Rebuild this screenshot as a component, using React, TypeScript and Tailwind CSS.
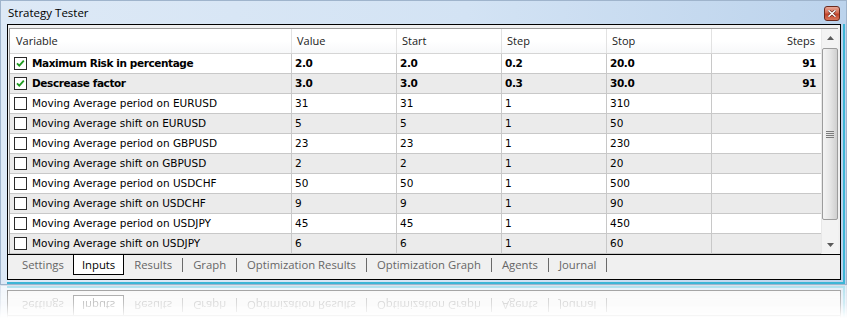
import React from "react";

type Row = {
  name: string;
  v: string;
  s: string;
  st: string;
  sp: string;
  steps?: string;
  checked?: boolean;
};

const rows: Row[] = [
  { name: "Maximum Risk in percentage", v: "2.0", s: "2.0", st: "0.2", sp: "20.0", steps: "91", checked: true },
  { name: "Descrease factor", v: "3.0", s: "3.0", st: "0.3", sp: "30.0", steps: "91", checked: true },
  { name: "Moving Average period on EURUSD", v: "31", s: "31", st: "1", sp: "310" },
  { name: "Moving Average shift on EURUSD", v: "5", s: "5", st: "1", sp: "50" },
  { name: "Moving Average period on GBPUSD", v: "23", s: "23", st: "1", sp: "230" },
  { name: "Moving Average shift on GBPUSD", v: "2", s: "2", st: "1", sp: "20" },
  { name: "Moving Average period on USDCHF", v: "50", s: "50", st: "1", sp: "500" },
  { name: "Moving Average shift on USDCHF", v: "9", s: "9", st: "1", sp: "90" },
  { name: "Moving Average period on USDJPY", v: "45", s: "45", st: "1", sp: "450" },
  { name: "Moving Average shift on USDJPY", v: "6", s: "6", st: "1", sp: "60" },
];

const tabs = ["Results", "Graph", "Optimization Results", "Optimization Graph", "Agents", "Journal"];

function Checkbox({ checked }: { checked?: boolean }) {
  return (
    <div className="w-[13px] h-[13px] border border-[#2a2a2a] bg-white flex items-center justify-center shrink-0">
      {checked && (
        <svg width="11" height="11" viewBox="0 0 11 11">
          <path d="M2 5.3 L4.3 7.6 L8.8 2.6" fill="none" stroke="#1e9a1e" strokeWidth="1.8" />
        </svg>
      )}
    </div>
  );
}

function TabStrip() {
  return (
    <div className="h-[25px] border-t border-black bg-[#f0f0f0] flex items-start pl-[4px] font-['Open_Sans',sans-serif] text-[11.3px] leading-none">
      <div className="h-[20px] flex items-center">
        <div className="pl-[10px] pr-[9px] text-[#666666]">Settings</div>
        <div className="h-[20px] px-[8px] bg-white border-x border-b border-black flex items-center text-black">
          Inputs
        </div>
        {tabs.map((t) => (
          <div key={t} className="flex items-center h-[20px]">
            <div className="px-[10px] text-[#666666]">{t}</div>
            <div className="w-px h-[14px] bg-[#6a6a6a]" />
          </div>
        ))}
      </div>
    </div>
  );
}

function Scrollbar() {
  return (
    <div className="w-[17px] h-[225px] bg-[#f3f3f3] border-l border-[#e8e8e8] flex flex-col">
      <div className="h-[18px] flex items-center justify-center">
        <svg width="7" height="4" viewBox="0 0 7 4">
          <path d="M0 4 L3.5 0 L7 4 Z" fill="#5a5a5a" />
        </svg>
      </div>
      <div className="h-[172px] mt-[1px] border border-[#9c9c9c] rounded-[2px] bg-[linear-gradient(to_right,#f4f4f4,#e6e6e6_50%,#cfcfcf)] flex items-center justify-center">
        <div className="flex flex-col gap-[1px]">
          <div className="w-[8px] h-px bg-[#7c7c7c]" />
          <div className="w-[8px] h-px bg-[#7c7c7c]" />
          <div className="w-[8px] h-px bg-[#7c7c7c]" />
          <div className="w-[8px] h-px bg-[#7c7c7c]" />
        </div>
      </div>
      <div className="flex-1" />
      <div className="h-[18px] flex items-center justify-center">
        <svg width="7" height="4" viewBox="0 0 7 4">
          <path d="M0 0 L3.5 4 L7 0 Z" fill="#5a5a5a" />
        </svg>
      </div>
    </div>
  );
}

function Table() {
  const cell = "border-r border-[#c8c8c8] flex items-center pl-[3px] overflow-hidden whitespace-nowrap";
  const hcell = "border-r border-[#e2e2e2] flex items-center pl-[5px] whitespace-nowrap";
  return (
    <div className="flex border-l border-t border-[#9a9a9a] bg-white">
      <div className="w-[811px]">
        <div className="h-[25px] grid grid-cols-[282px_105px_105px_105px_105px_109px] border-b border-[#d5d5d5] bg-[linear-gradient(to_bottom,#ffffff,#ffffff_50%,#f7f8f9)] font-['Open_Sans',sans-serif] text-[11px] text-[#1a1a1a]">
          <div className={hcell + " pl-[6px]"}>Variable</div>
          <div className={hcell}>Value</div>
          <div className={hcell}>Start</div>
          <div className={hcell}>Step</div>
          <div className={hcell}>Stop</div>
          <div className="flex items-center justify-end pr-[6px]">Steps</div>
        </div>
        {rows.map((r, i) => {
          const bold = r.checked ? "font-bold tracking-[-0.4px]" : "";
          return (
            <div
              key={r.name}
              className={
                "h-[20px] grid grid-cols-[282px_105px_105px_105px_105px_109px] border-b border-[#c8c8c8] font-['DejaVu_Sans',sans-serif] text-[10.5px] text-black " +
                (i % 2 === 1 ? "bg-[#ebebeb]" : "bg-white")
              }
            >
              <div className={cell + " pl-[4px] gap-[5px]"}>
                <Checkbox checked={r.checked} />
                <span className={bold}>{r.name}</span>
              </div>
              <div className={cell}><span className={bold}>{r.v}</span></div>
              <div className={cell}><span className={bold}>{r.s}</span></div>
              <div className={cell}><span className={bold}>{r.st}</span></div>
              <div className={cell}><span className={bold}>{r.sp}</span></div>
              <div className="flex items-center justify-end pr-[5px]">
                <span className={bold}>{r.steps ?? ""}</span>
              </div>
            </div>
          );
        })}
      </div>
      <Scrollbar />
    </div>
  );
}

function CloseButton() {
  return (
    <div className="w-[16px] h-[15px] mt-[5px] rounded-[3px] border border-[#6b2a1e] bg-[linear-gradient(to_bottom,#e9a797,#d36a52_45%,#c0432b_55%,#d8755a)] flex items-center justify-center">
      <svg width="8" height="7" viewBox="0 0 8 7">
        <path d="M1 0.8 L7 6.2 M7 0.8 L1 6.2" stroke="#5a1a10" strokeWidth="2.6" strokeLinecap="square" />
        <path d="M1 0.8 L7 6.2 M7 0.8 L1 6.2" stroke="#ffffff" strokeWidth="1.5" strokeLinecap="square" />
      </svg>
    </div>
  );
}

const frameBg = "bg-[linear-gradient(to_right,#dde9f6,#d3e3f4_55%,#bcd3ec)]";

function Reflection() {
  return (
    <div className="h-[33px] overflow-hidden opacity-[0.4] [mask-image:linear-gradient(to_bottom,black,rgba(0,0,0,0.6)_55%,transparent)]">
      <div className="-scale-y-100">
        <div className={"w-[847px] h-[33px] border-x border-b border-[#9fb4cc] pl-[6px] pr-[1px] " + frameBg}>
          <div className="border-r-2 border-b-2 border-[#3db5d6] pr-[2px] pb-[2px] w-[838px]">
            <div className="w-[834px] border-x border-b border-black bg-[#f0f0f0]">
              <div className="h-[2px] pl-[1px] pr-[2px]">
                <div className="h-[2px] bg-[#ebebeb] border-b border-[#c8c8c8]" />
              </div>
              <TabStrip />
            </div>
          </div>
        </div>
      </div>
    </div>
  );
}

export default function App() {
  return (
    <div className="w-[847px] h-[318px] bg-white overflow-hidden">
      <div className={"w-[847px] h-[285px] border border-[#9fb4cc] flex flex-col " + frameBg}>
        <div className="h-[23px] flex justify-between pl-[7px] pr-[6px]">
          <div className="h-[23px] flex items-center pt-[1px] font-['Open_Sans',sans-serif] text-[11.5px] text-black">
            Strategy Tester
          </div>
          <CloseButton />
        </div>
        <div className="pl-[6px] pr-[1px]">
          <div className="w-[838px] border-r-2 border-b-2 border-[#3db5d6] pr-[2px] pb-[2px]">
            <div className="w-[834px] border border-black bg-[#f0f0f0]">
              <div className="pt-[3px] pl-[1px] pr-[2px]">
                <Table />
              </div>
              <TabStrip />
            </div>
          </div>
        </div>
      </div>
      <Reflection />
    </div>
  );
}
